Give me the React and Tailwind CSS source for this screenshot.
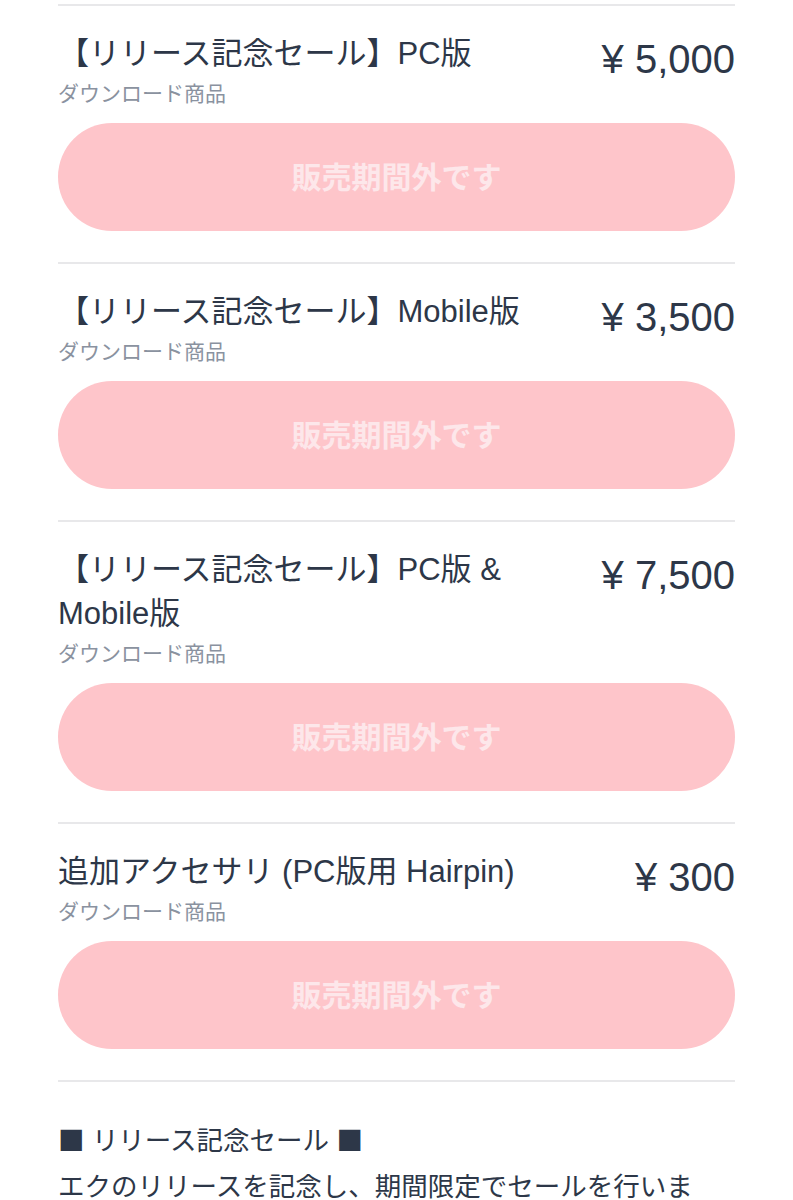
import React from "react";

const products = [
  { title: "【リリース記念セール】PC版", price: "5,000" },
  { title: "【リリース記念セール】Mobile版", price: "3,500" },
  { title: "【リリース記念セール】PC版 & Mobile版", price: "7,500" },
  { title: "追加アクセサリ (PC版用 Hairpin)", price: "300" },
];

const ProductRow = ({ title, price }) => {
  return (
    <section className="border-t-2 border-[#e8e8ea] pt-[26px] pb-[31px]">
      <div className="flex items-start justify-between gap-6">
        <div className="min-w-0 flex-1">
          <h3 className="text-[31px] leading-[44px] text-[#2d3748]">{title}</h3>
          <p className="mt-[3px] text-[21px] leading-[30px] text-[#8a929f]">
            ダウンロード商品
          </p>
        </div>
        <p className="shrink-0 text-[40px] leading-[54px] text-[#2d3748]">
          ¥ {price}
        </p>
      </div>
      <button
        disabled
        className="mt-[14px] w-full h-[108px] rounded-full bg-[#fec5ca] text-[30px] font-bold text-[#fde7ea]"
      >
        販売期間外です
      </button>
    </section>
  );
};

const App = () => {
  return (
    <div className="min-h-screen bg-white pt-1 px-[58px] font-['Liberation_Sans','Noto_Sans_CJK_JP',sans-serif]">
      {products.map((p) => (
        <ProductRow key={p.title} title={p.title} price={p.price} />
      ))}

      {/* sale description */}
      <div className="border-t-2 border-[#e8e8ea] pt-[34px] text-[26.5px] leading-[46px] text-[#2d3748]">
        <h4>
          <span className="font-['Noto_Sans_CJK_JP',sans-serif]">■</span>{" "}
          リリース記念セール{" "}
          <span className="font-['Noto_Sans_CJK_JP',sans-serif]">■</span>
        </h4>
        <p>
          エクのリリースを記念し、期間限定でセールを行います。PC版、Mobile版、およびセット版をお得な価格でご購入いただけます。
        </p>
      </div>
    </div>
  );
};

export default App;
